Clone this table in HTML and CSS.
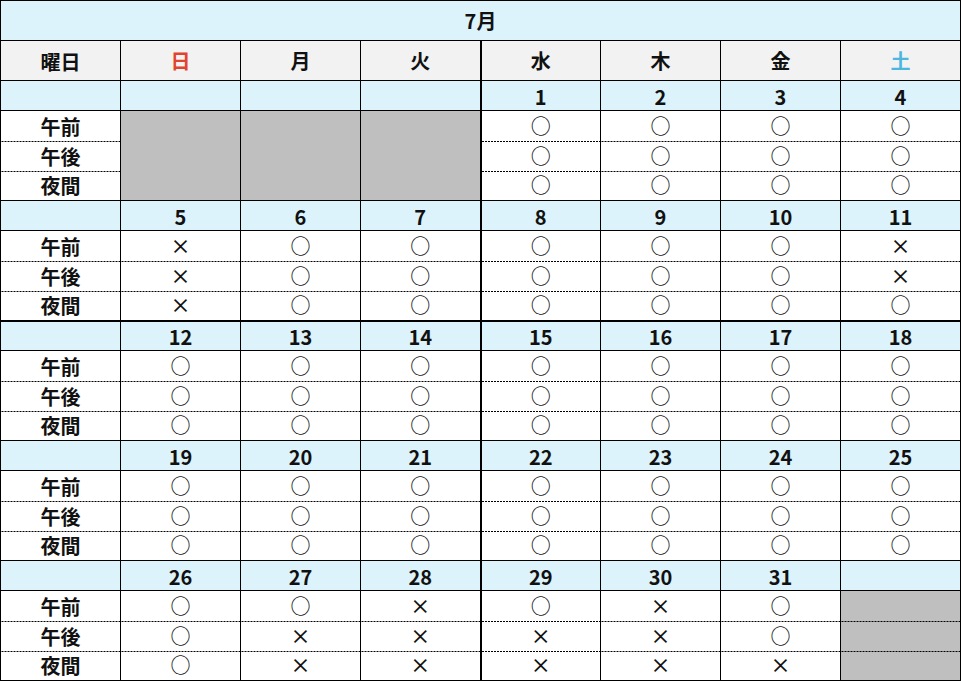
FILE: index.html
```html
<!DOCTYPE html>
<html lang="ja">
<head>
<meta charset="utf-8">
<title>7月</title>
<link rel="stylesheet" href="styles.css">
</head>
<body>
<table class="cal">
  <colgroup>
    <col class="c"><col class="c"><col class="c"><col class="c"><col class="c"><col class="c"><col class="c"><col class="c">
  </colgroup>
  <tr class="title"><td colspan="8">7月</td></tr>
  <tr class="head">
    <td class="lbl">曜日</td><td class="sun">日</td><td>月</td><td>火</td><td class="sep">水</td><td>木</td><td>金</td><td class="sat">土</td>
  </tr>

  <tr class="date"><td></td><td></td><td></td><td></td><td class="sep">1</td><td>2</td><td>3</td><td>4</td></tr>
  <tr class="p1"><td class="lbl">午前</td><td class="off" rowspan="3"></td><td class="off" rowspan="3"></td><td class="off" rowspan="3"></td><td class="sep">○</td><td>○</td><td>○</td><td>○</td></tr>
  <tr class="p2"><td class="lbl">午後</td><td class="sep">○</td><td>○</td><td>○</td><td>○</td></tr>
  <tr class="p2"><td class="lbl">夜間</td><td class="sep">○</td><td>○</td><td>○</td><td>○</td></tr>

  <tr class="date"><td></td><td>5</td><td>6</td><td>7</td><td class="sep">8</td><td>9</td><td>10</td><td>11</td></tr>
  <tr class="p1"><td class="lbl">午前</td><td>×</td><td>○</td><td>○</td><td class="sep">○</td><td>○</td><td>○</td><td>×</td></tr>
  <tr class="p2"><td class="lbl">午後</td><td>×</td><td>○</td><td>○</td><td class="sep">○</td><td>○</td><td>○</td><td>×</td></tr>
  <tr class="p2"><td class="lbl">夜間</td><td>×</td><td>○</td><td>○</td><td class="sep">○</td><td>○</td><td>○</td><td>○</td></tr>

  <tr class="date thick"><td></td><td>12</td><td>13</td><td>14</td><td class="sep">15</td><td>16</td><td>17</td><td>18</td></tr>
  <tr class="p1"><td class="lbl">午前</td><td>○</td><td>○</td><td>○</td><td class="sep">○</td><td>○</td><td>○</td><td>○</td></tr>
  <tr class="p2"><td class="lbl">午後</td><td>○</td><td>○</td><td>○</td><td class="sep">○</td><td>○</td><td>○</td><td>○</td></tr>
  <tr class="p2"><td class="lbl">夜間</td><td>○</td><td>○</td><td>○</td><td class="sep">○</td><td>○</td><td>○</td><td>○</td></tr>

  <tr class="date"><td></td><td>19</td><td>20</td><td>21</td><td class="sep">22</td><td>23</td><td>24</td><td>25</td></tr>
  <tr class="p1"><td class="lbl">午前</td><td>○</td><td>○</td><td>○</td><td class="sep">○</td><td>○</td><td>○</td><td>○</td></tr>
  <tr class="p2"><td class="lbl">午後</td><td>○</td><td>○</td><td>○</td><td class="sep">○</td><td>○</td><td>○</td><td>○</td></tr>
  <tr class="p2"><td class="lbl">夜間</td><td>○</td><td>○</td><td>○</td><td class="sep">○</td><td>○</td><td>○</td><td>○</td></tr>

  <tr class="date"><td></td><td>26</td><td>27</td><td>28</td><td class="sep">29</td><td>30</td><td>31</td><td></td></tr>
  <tr class="p1"><td class="lbl">午前</td><td>○</td><td>○</td><td>×</td><td class="sep">○</td><td>×</td><td>○</td><td class="off"></td></tr>
  <tr class="p2"><td class="lbl">午後</td><td>○</td><td>×</td><td>×</td><td class="sep">×</td><td>×</td><td>○</td><td class="off"></td></tr>
  <tr class="p2"><td class="lbl">夜間</td><td>○</td><td>×</td><td>×</td><td class="sep">×</td><td>×</td><td>×</td><td class="off"></td></tr>
</table>
</body>
</html>
```

FILE: styles.css
```css
html, body {
  margin: 0;
  padding: 0;
  background: #ffffff;
}

.cal {
  border-collapse: collapse;
  table-layout: fixed;
  border: 1px solid #000;
  font-family: "Noto Sans CJK JP", "Noto Sans", sans-serif;
  color: #111;
}

.cal col.c {
  width: 120px;
}

.cal td {
  box-sizing: border-box;
  padding: 0;
  text-align: center;
  vertical-align: middle;
  border-left: 1px solid #000;
  border-right: 1px solid #000;
  font-size: 20px;
  line-height: 22px;
  white-space: nowrap;
}

.cal td.sep {
  border-left: 2px solid #000;
}

.title td {
  height: 40px;
  background: #dcf3fc;
  font-size: 20px;
  font-weight: 700;
  border-bottom: 1px solid #000;
}

.head td {
  height: 40px;
  background: #f2f2f2;
  font-weight: 700;
  border-bottom: 1px solid #000;
}

.head td.sun {
  color: #e2432e;
}

.head td.sat {
  color: #4db6df;
}

.date td {
  height: 30px;
  background: #dcf3fc;
  font-weight: 700;
  font-size: 20px;
  line-height: 22px;
  padding-top: 2px;
  border-top: 1px solid #000;
  border-bottom: 1px solid #000;
}

.date.thick td {
  border-top: 2px solid #000;
}

.p1 td,
.p2 td {
  height: 30px;
  font-weight: 500;
  font-size: 20px;
}

.p2 td {
  border-top: none;
  background-image: linear-gradient(to right, #000 2px, transparent 2px);
  background-size: 3px 1px;
  background-repeat: repeat-x;
  background-position: 0 0;
}

.cal td.lbl {
  font-weight: 700;
  font-size: 20px;
  padding-top: 2px;
}

.cal td.off {
  background-color: #bfbfbf;
}
```
